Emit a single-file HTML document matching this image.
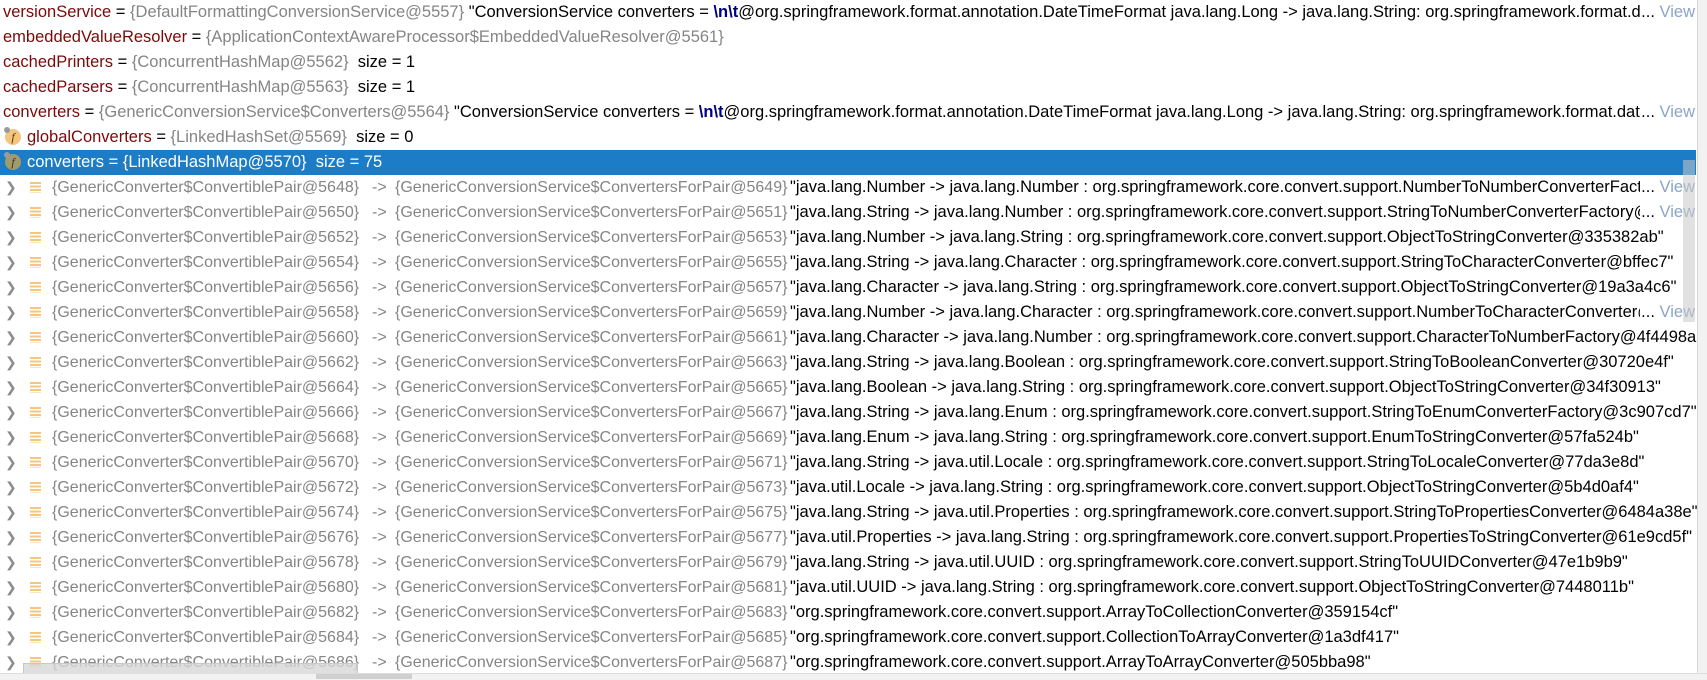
<!DOCTYPE html>
<html><head><meta charset="utf-8"><style>
html,body{margin:0;padding:0;background:#fff;width:1707px;height:679px;overflow:hidden;font-family:"Liberation Sans",sans-serif;font-size:16.5px;}
.row{position:absolute;left:0;width:1697px;height:25px;line-height:25px;white-space:nowrap;overflow:hidden;color:#000;}
.sel{background:#1d7cc6;color:#fff;}
.n{color:#7a0a0a;}
.g{color:#858585;}
.b{color:#000080;font-weight:bold;}
.a{position:absolute;top:0;font-size:16px;}
.clip{position:absolute;top:0;overflow:hidden;white-space:nowrap;}
.view{position:absolute;top:0;right:2px;color:#8aa4c8;background:#fff;padding-left:1px;}
.view span{color:#000}
.arr{position:absolute;left:5px;top:0;color:#8c8c8c;font-size:14px;}
.ic{position:absolute;left:30px;top:7px;width:11px;height:11px;background:repeating-linear-gradient(#f5c77e 0 2px,#fff 2px 3.5px);}
.f{position:absolute;left:5px;top:4px;width:16px;height:16px;border-radius:50%;background:#f3c57f;color:#5a3a00;font-size:12px;line-height:16px;text-align:center;font-family:"Liberation Serif",serif;font-style:italic;}
.sel .f{background:#a39a6a;color:#333;}
.f:before{content:"";position:absolute;left:-1px;top:-2px;width:6px;height:6px;border-radius:50%;background:#9a9a9a;}
</style></head><body>

<div class="row" style="top:0"><div class="clip" style="left:3px;width:1640px"><span class="n">versionService</span> = <span class="g">{DefaultFormattingConversionService@5557}</span> "ConversionService converters = <span class="b">\n\t</span>@org.springframework.format.annotation.DateTimeFormat java.lang.Long -&gt; java.lang.String: org.springframework.format.datetime</div><div class="view"><span>...</span> View</div></div>
<div class="row" style="top:25px"><div class="clip" style="left:3px"><span class="n">embeddedValueResolver</span> = <span class="g">{ApplicationContextAwareProcessor$EmbeddedValueResolver@5561}</span></div></div>
<div class="row" style="top:50px"><div class="clip" style="left:3px"><span class="n">cachedPrinters</span> = <span class="g">{ConcurrentHashMap@5562}</span>&nbsp; size = 1</div></div>
<div class="row" style="top:75px"><div class="clip" style="left:3px"><span class="n">cachedParsers</span> = <span class="g">{ConcurrentHashMap@5563}</span>&nbsp; size = 1</div></div>
<div class="row" style="top:100px"><div class="clip" style="left:3px;width:1640px"><span class="n">converters</span> = <span class="g">{GenericConversionService$Converters@5564}</span> "ConversionService converters = <span class="b">\n\t</span>@org.springframework.format.annotation.DateTimeFormat java.lang.Long -&gt; java.lang.String: org.springframework.format.datetime</div><div class="view"><span>...</span> View</div></div>
<div class="row" style="top:125px"><div class="f">f</div><div class="clip" style="left:27px"><span class="n">globalConverters</span> = <span class="g">{LinkedHashSet@5569}</span>&nbsp; size = 0</div></div>
<div class="row sel" style="top:150px;width:1696px"><div class="f">f</div><div class="clip" style="left:27px">converters = {LinkedHashMap@5570}&nbsp; size = 75</div></div>

<div id="tree"></div>
<script>
var d=[
["5648","5649",'"java.lang.Number -> java.lang.Number : org.springframework.core.convert.support.NumberToNumberConverterFactory@1',1],
["5650","5651",'"java.lang.String -> java.lang.Number : org.springframework.core.convert.support.StringToNumberConverterFactory@1',1],
["5652","5653",'"java.lang.Number -> java.lang.String : org.springframework.core.convert.support.ObjectToStringConverter@335382ab"'],
["5654","5655",'"java.lang.String -> java.lang.Character : org.springframework.core.convert.support.StringToCharacterConverter@bffec7"'],
["5656","5657",'"java.lang.Character -> java.lang.String : org.springframework.core.convert.support.ObjectToStringConverter@19a3a4c6"'],
["5658","5659",'"java.lang.Number -> java.lang.Character : org.springframework.core.convert.support.NumberToCharacterConverter@1',1],
["5660","5661",'"java.lang.Character -> java.lang.Number : org.springframework.core.convert.support.CharacterToNumberFactory@4f4498a6"'],
["5662","5663",'"java.lang.String -> java.lang.Boolean : org.springframework.core.convert.support.StringToBooleanConverter@30720e4f"'],
["5664","5665",'"java.lang.Boolean -> java.lang.String : org.springframework.core.convert.support.ObjectToStringConverter@34f30913"'],
["5666","5667",'"java.lang.String -> java.lang.Enum : org.springframework.core.convert.support.StringToEnumConverterFactory@3c907cd7"'],
["5668","5669",'"java.lang.Enum -> java.lang.String : org.springframework.core.convert.support.EnumToStringConverter@57fa524b"'],
["5670","5671",'"java.lang.String -> java.util.Locale : org.springframework.core.convert.support.StringToLocaleConverter@77da3e8d"'],
["5672","5673",'"java.util.Locale -> java.lang.String : org.springframework.core.convert.support.ObjectToStringConverter@5b4d0af4"'],
["5674","5675",'"java.lang.String -> java.util.Properties : org.springframework.core.convert.support.StringToPropertiesConverter@6484a38e"'],
["5676","5677",'"java.util.Properties -> java.lang.String : org.springframework.core.convert.support.PropertiesToStringConverter@61e9cd5f"'],
["5678","5679",'"java.lang.String -> java.util.UUID : org.springframework.core.convert.support.StringToUUIDConverter@47e1b9b9"'],
["5680","5681",'"java.util.UUID -> java.lang.String : org.springframework.core.convert.support.ObjectToStringConverter@7448011b"'],
["5682","5683",'"org.springframework.core.convert.support.ArrayToCollectionConverter@359154cf"'],
["5684","5685",'"org.springframework.core.convert.support.CollectionToArrayConverter@1a3df417"'],
["5686","5687",'"org.springframework.core.convert.support.ArrayToArrayConverter@505bba98"']
];
var h='';
function esc(s){return s.replace(/&/g,'&amp;').replace(/</g,'&lt;').replace(/>/g,'&gt;');}
d.forEach(function(r,i){
 var t=175+i*25;
 h+='<div class="row" style="top:'+t+'px"><div class="arr">&#10095;</div><div class="ic"></div>'+
 '<div class="a g" style="left:52px">{GenericConverter$ConvertiblePair@'+r[0]+'}</div>'+
 '<div class="a g" style="left:372px">-&gt;</div>'+
 '<div class="a g" style="left:395px">{GenericConversionService$ConvertersForPair@'+r[1]+'}</div>'+
 '<div class="clip" style="left:790px;width:'+(r[3]?852:907)+'px">'+esc(r[2])+'</div>'+
 (r[3]?'<div class="view"><span>...</span> View</div>':'')+'</div>';
});
document.getElementById('tree').innerHTML=h;
</script>

<div style="position:absolute;left:1697px;top:0;width:10px;height:679px;background:#f2f2f2;border-left:1px solid #d8d8d8;"></div>
<div style="position:absolute;left:1683px;top:160px;width:12px;height:162px;background:rgba(200,200,200,0.55);"></div>
<div style="position:absolute;left:23px;top:663px;width:333px;height:10px;background:rgba(215,215,215,0.8);border:1px solid #c8c8c8;"></div>
<div style="position:absolute;left:0;top:673px;width:1707px;height:6px;background:#f2f2f2;border-top:1px solid #ddd;"></div>
<div style="position:absolute;left:316px;top:674px;width:96px;height:5px;background:#cfcfcf;"></div>
</body></html>
